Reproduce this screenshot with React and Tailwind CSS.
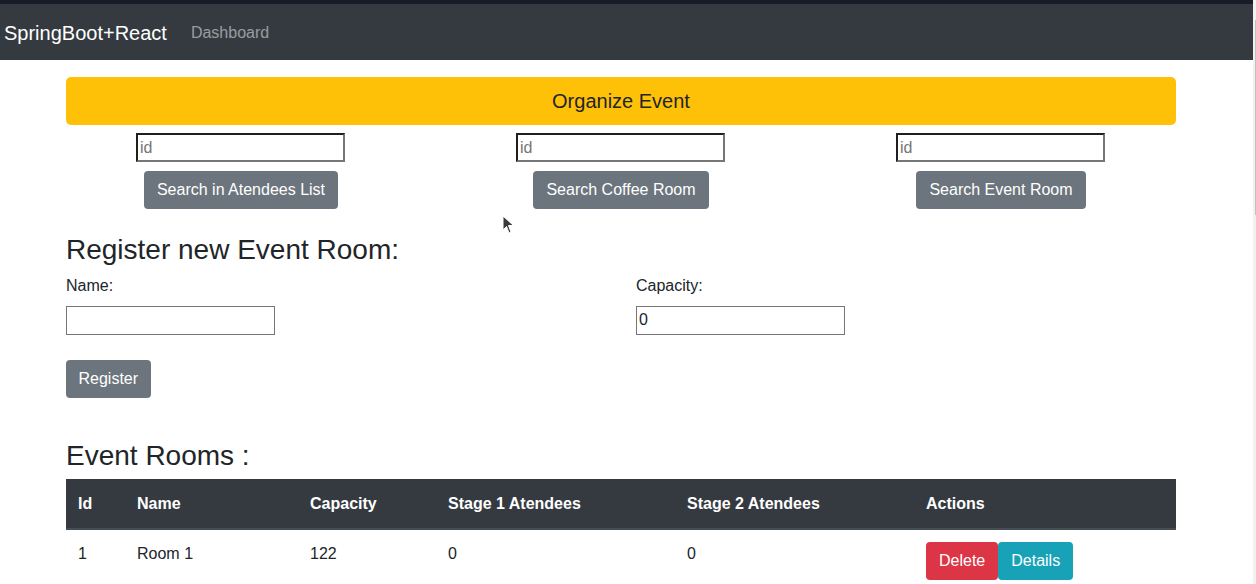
import React from 'react';

const rooms = [{ id: 1, name: 'Room 1', capacity: 122, stage1: 0, stage2: 0 }];

const searches = ['Search in Atendees List', 'Search Coffee Room', 'Search Event Room'];

export default function App() {
  return (
    <div className="flex h-[584px] w-full overflow-hidden bg-white font-['Liberation_Sans',Arial,sans-serif] text-[#212529]">
      <div className="relative flex-1">
        <div className="h-1 bg-[#191b27]" />
        {/* Navbar */}
        <nav className="flex h-14 items-center bg-[#343a40] pl-1 pt-[2px]">
          <span className="text-[20px] text-white">SpringBoot+React</span>
          <span className="ml-6 text-base text-white/50">Dashboard</span>
        </nav>

        <div className="ml-[66px] w-[1110px]">
          <div className="mt-[17px] flex h-12 items-center justify-center rounded-[5px] bg-[#ffc107] text-[20px]">
            Organize Event
          </div>

          {/* Search inputs */}
          <div className="-ml-[15px] mt-2 grid w-[1140px] grid-cols-3">
            {searches.map(label => (
              <div key={label} className="flex flex-col items-center">
                <input
                  type="text"
                  placeholder="id"
                  className="-ml-px h-[29px] w-[209px] border-2 border-b-[#767676] border-l-[#1f1f1f] border-r-[#767676] border-t-[#1f1f1f] px-[2px] text-base placeholder:text-[#757575] outline-none"
                />
                <button className="mt-[9px] h-[38px] rounded bg-[#6c757d] px-[13px] text-base text-white">
                  {label}
                </button>
              </div>
            ))}
          </div>

          {/* Register form */}
          <h3 className="mt-[24px] text-[28px] leading-[1.2]">Register new Event Room:</h3>
          <div className="-ml-[15px] mt-[7px] grid w-[1140px] grid-cols-2">
            <div className="px-[15px]">
              <label className="block text-base leading-6">Name:</label>
              <input type="text" className="mt-[8px] h-[29px] w-[209px] border border-[#767676] px-[2px] text-base outline-none" />
            </div>
            <div className="px-[15px]">
              <label className="block text-base leading-6">Capacity:</label>
              <input type="text" defaultValue="0" className="mt-[8px] h-[29px] w-[209px] border border-[#767676] px-[2px] text-base outline-none" />
            </div>
          </div>
          <button className="mt-[25px] h-[38px] rounded bg-[#6c757d] px-[12.5px] text-base text-white">Register</button>

          {/* Table */}
          <h3 className="mt-[41px] text-[28px] leading-[1.2]">Event Rooms :</h3>
          <table className="mt-[7px] w-full border-collapse text-left text-base">
            <thead>
              <tr className="bg-[#343a40] text-white">
                <th className="h-[50px] w-[59px] border-b-2 border-[#454d55] px-3 font-bold">Id</th>
                <th className="w-[173px] border-b-2 border-[#454d55] px-3 font-bold">Name</th>
                <th className="w-[138px] border-b-2 border-[#454d55] px-3 font-bold">Capacity</th>
                <th className="w-[239px] border-b-2 border-[#454d55] px-3 font-bold">Stage 1 Atendees</th>
                <th className="w-[239px] border-b-2 border-[#454d55] px-3 font-bold">Stage 2 Atendees</th>
                <th className="border-b-2 border-[#454d55] px-3 font-bold">Actions</th>
              </tr>
            </thead>
            <tbody>
              {rooms.map(room => (
                <tr key={room.id}>
                  <td className="px-3 py-3 align-top leading-6">{room.id}</td>
                  <td className="px-3 py-3 align-top leading-6">{room.name}</td>
                  <td className="px-3 py-3 align-top leading-6">{room.capacity}</td>
                  <td className="px-3 py-3 align-top leading-6">{room.stage1}</td>
                  <td className="px-3 py-3 align-top leading-6">{room.stage2}</td>
                  <td className="px-3 py-3 align-top">
                    <div className="flex">
                      <button className="h-[38px] rounded bg-[#dc3545] px-[13px] text-white">Delete</button>
                      <button className="h-[38px] rounded bg-[#17a2b8] px-[13px] text-white">Details</button>
                    </div>
                  </td>
                </tr>
              ))}
            </tbody>
          </table>
        </div>

        {/* mouse pointer */}
        <svg className="absolute left-[502px] top-[215px]" width="14" height="20" viewBox="0 0 14 20">
          <path d="M1 1 L1 15 L4.5 11.5 L7 18 L9 17 L6.5 10.5 L11.5 10.5 Z" fill="#3a3a3a" stroke="#ffffff" strokeWidth="1" />
        </svg>
      </div>

      {/* scrollbar */}
      <div className="flex w-[3px] flex-col bg-[#f1f1f1]">
        <div className="ml-auto mt-5 h-[195px] w-px bg-[#c1c1c1]" />
      </div>
    </div>
  );
}
